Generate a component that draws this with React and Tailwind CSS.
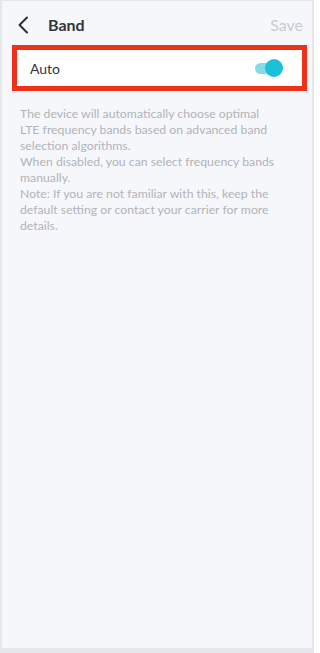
import React from "react";

const ChevronLeft = () => (
  <svg width="12" height="18" viewBox="0 0 12 18" fill="none">
    <path d="M10 1.5 L2.5 9 L10 16.5" stroke="#2f2f33" strokeWidth="2" strokeLinecap="round" strokeLinejoin="round" />
  </svg>
);

const Toggle = () => (
  <div className="relative w-[28px] h-[18px] flex items-center">
    <div className="w-[24px] h-[11px] rounded-full bg-[#84dbe8]" />
    <div className="absolute right-0 top-0 w-[18px] h-[18px] rounded-full bg-[#1cc0d9]" />
  </div>
);

export default function App() {
  return (
    <div
      className="h-[653px] w-[314px] bg-[#f5f7fb] border-l-2 border-r-2 border-t border-b-[5px] border-[#e6e7e9] flex flex-col"
      style={{ fontFamily: "Lato, 'Noto Sans', sans-serif" }}
    >
      {/* Header */}
      <div className="h-[44px] pt-[4px] flex items-center pl-[15px] pr-[9px]">
        <ChevronLeft />
        <span className="ml-[19px] text-[16px] font-bold text-[#333438]">Band</span>
        <span className="ml-auto text-[16px] text-[#c9cbd0]">Save</span>
      </div>

      {/* Auto row */}
      <div className="ml-[10px] mr-[5px] border-[5px] border-[#f0311a] bg-white h-[46px] flex items-center pl-[13px] pr-[19px]">
        <span className="text-[14px] text-[#333438]">Auto</span>
        <div className="ml-auto">
          <Toggle />
        </div>
      </div>

      {/* Description */}
      <div className="pl-[18px] pr-[8px] pt-[15px] text-[12.25px] leading-[16px] text-[#b1b4b9]">
        <p>
          The device will automatically choose optimal
          <br />
          LTE frequency bands based on advanced band
          <br />
          selection algorithms.
        </p>
        <p>
          When disabled, you can select frequency bands
          <br />
          manually.
        </p>
        <p>
          Note: If you are not familiar with this, keep the
          <br />
          default setting or contact your carrier for more
          <br />
          details.
        </p>
      </div>
    </div>
  );
}
